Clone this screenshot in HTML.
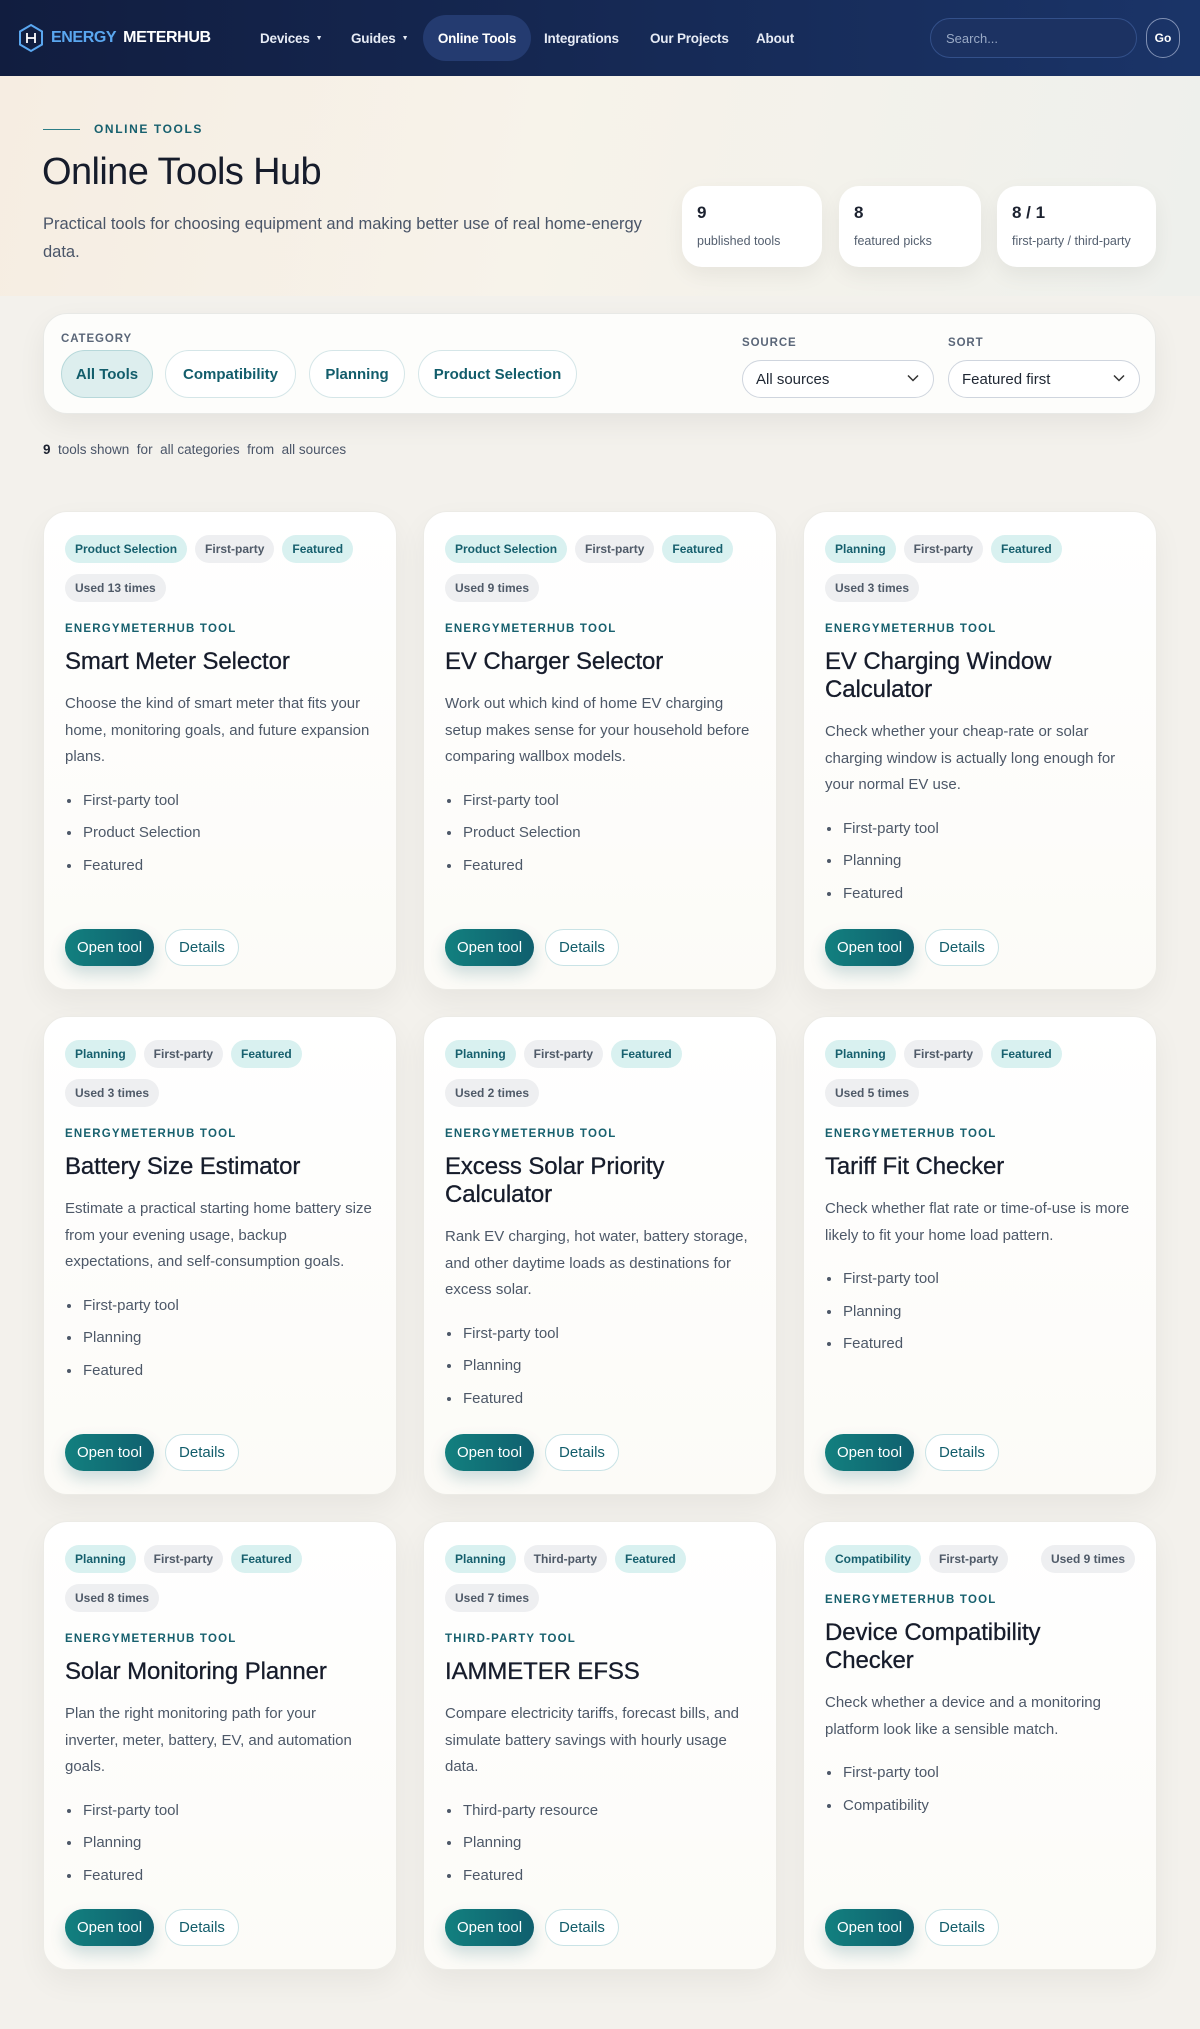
<!DOCTYPE html>
<html><head><meta charset="utf-8">
<style>
*{box-sizing:border-box;margin:0;padding:0}
body{width:1200px;height:2029px;overflow:hidden;font-family:"Liberation Sans",sans-serif;background:#f3f1ec;color:#1c2230}
.nav{height:76px;background:linear-gradient(90deg,#111d3f,#1a3468);color:#fff;position:relative;box-shadow:0 6px 18px rgba(0,0,0,.18)}
.logo{position:absolute;left:18px;top:0;height:76px;display:flex;align-items:center;gap:7px;font-weight:bold;font-size:16px;letter-spacing:-.4px}
.logo .e{color:#5aa7f0}
.mi{position:absolute;top:15px;height:46px;display:flex;align-items:center;font-size:13.5px;font-weight:bold;color:#e6ebf5;letter-spacing:-.2px}
.mi.act{background:#243b70;border-radius:23px;color:#fff;justify-content:center}
.caret{font-size:7px;margin-left:6px}
.search{position:absolute;left:930px;top:18px;width:207px;height:40px;border:1px solid #33508a;border-radius:20px;background:#1c3262;color:#9aaac6;font-size:13px;display:flex;align-items:center;padding-left:15px}
.go{position:absolute;left:1146px;top:18px;width:34px;height:40px;border:1px solid #8191b4;border-radius:20px;font-size:12px;font-weight:bold;display:flex;align-items:center;justify-content:center}
.hero{height:220px;background:linear-gradient(100deg,#f6ede2 0%,#f7f3ea 45%,#eef0ec 100%);position:relative}
.eyebrow{position:absolute;left:43px;font-size:12px;font-weight:bold;letter-spacing:1.6px;color:#17606e;display:flex;align-items:center;gap:14px}
.eyebrow i{display:block;width:37px;height:1px;background:#2c7d86}
.hero h1{position:absolute;left:42px;font-size:38px;font-weight:normal;letter-spacing:-.6px;color:#161c2b}
.hero p{position:absolute;left:43px;width:610px;font-size:16.5px;line-height:28px;color:#4a5568}
.stat{position:absolute;top:186px;height:81px;background:#fff;border-radius:20px;padding:17px 15px;box-shadow:0 8px 22px rgba(0,0,0,.06)}
.stat b{display:block;font-size:17px;color:#1c2230}
.stat span{display:block;font-size:12.5px;color:#556070;margin-top:11px}
.filter{position:absolute;left:43px;top:313px;width:1113px;height:101px;background:#fdfdfb;border:1px solid #e8e9e6;border-radius:24px;box-shadow:0 10px 28px rgba(0,0,0,.06)}
.lbl{position:absolute;font-size:11.5px;font-weight:bold;letter-spacing:.9px;color:#5a6678}
.pill{position:absolute;top:36px;height:48px;border:1px solid #d5e6e8;border-radius:24px;font-weight:bold;font-size:15px;color:#125d6b;display:flex;align-items:center;justify-content:center;background:#fff}
.pill.on{background:#ddeeee;border-color:#b7d8da}
.sel{position:absolute;top:46px;height:38px;border:1px solid #cfd5de;border-radius:19px;background:#fff;font-size:15px;color:#1f2733;display:flex;align-items:center;padding-left:13px}
.sel svg{position:absolute;right:14px;top:13px}
.summary{position:absolute;left:43px;top:442px;font-size:13.5px;color:#4a5568}
.summary b{color:#1c2230}
.card{position:absolute;width:354px;background:linear-gradient(180deg,#fff 0%,#fcfbf7 100%);border:1px solid #ecebe6;border-radius:24px;padding:23px 21px 23px;display:flex;flex-direction:column;box-shadow:0 12px 30px rgba(0,0,0,.05)}
.tags{display:flex;flex-wrap:wrap;gap:11px 8px;align-items:center}
.tag{height:28px;border-radius:14px;padding:0 10px;font-size:12px;font-weight:bold;display:flex;align-items:center;background:#eeeff1;color:#4f5a68}
.tag.t{background:#d9f1f0;color:#17606e}
.ey{margin-top:21px;font-size:11.5px;font-weight:bold;letter-spacing:1.2px;color:#17606e}
.card h3{margin-top:13px;font-size:24px;font-weight:normal;line-height:28px;letter-spacing:-.1px;color:#161c2b;-webkit-text-stroke:.3px #161c2b;padding-right:20px}
.desc{margin-top:15px;font-size:15px;line-height:26.5px;color:#4d5868;padding-right:0}
.card ul{margin-top:14px;padding-left:17px;font-size:15px;color:#4d5868}
.card li{line-height:32.5px;padding-left:1px}
.card li::marker{font-size:15px}
.acts{margin-top:auto;display:flex;gap:11px}
.open{height:37px;padding:0 12px;border-radius:19px;background:linear-gradient(90deg,#12807f,#105f6e);color:#fff;font-size:15px;display:flex;align-items:center;box-shadow:0 8px 16px rgba(16,95,110,.2)}
.det{height:37px;padding:0 13px;border-radius:19px;border:1px solid #c9e3e6;background:#fff;color:#125d6b;font-size:15px;display:flex;align-items:center}
</style></head><body>
<div class="nav">
 <div class="logo"><svg width="26" height="30" viewBox="0 0 26 30"><path d="M13 2 L24 8.5 V21.5 L13 28 L2 21.5 V8.5 Z" fill="none" stroke="#5aa7f0" stroke-width="2"/><path d="M9 10 V20 M17 10 V20 M9 15 H17" stroke="#fff" stroke-width="1.8"/></svg><span class="e">ENERGY</span><span>METERHUB</span></div>
 <div class="mi" style="left:260px">Devices<span class="caret">▼</span></div>
 <div class="mi" style="left:351px">Guides<span class="caret">▼</span></div>
 <div class="mi act" style="left:423px;width:108px">Online Tools</div>
 <div class="mi" style="left:544px">Integrations</div>
 <div class="mi" style="left:650px">Our Projects</div>
 <div class="mi" style="left:756px">About</div>
 <div class="search">Search...</div><div class="go">Go</div>
</div>
<div class="hero">
 <div class="eyebrow" style="top:46px"><i></i>ONLINE TOOLS</div>
 <h1 style="top:75px">Online Tools Hub</h1>
 <p style="top:134px">Practical tools for choosing equipment and making better use of real home-energy data.</p>
</div>
<div class="stat" style="left:682px;width:140px"><b>9</b><span>published tools</span></div>
<div class="stat" style="left:839px;width:142px"><b>8</b><span>featured picks</span></div>
<div class="stat" style="left:997px;width:159px"><b>8 / 1</b><span>first-party / third-party</span></div>

<div class="filter">
 <div class="lbl" style="left:17px;top:19px">CATEGORY</div>
 <div class="pill on" style="left:17px;width:92px">All Tools</div>
 <div class="pill" style="left:121px;width:131px">Compatibility</div>
 <div class="pill" style="left:265px;width:96px">Planning</div>
 <div class="pill" style="left:374px;width:159px">Product Selection</div>
 <div class="lbl" style="left:698px;top:23px">SOURCE</div>
 <div class="lbl" style="left:904px;top:23px">SORT</div>
 <div class="sel" style="left:698px;width:192px">All sources<svg width="12" height="8" viewBox="0 0 12 8"><path d="M1 1.5 L6 6.5 L11 1.5" fill="none" stroke="#333" stroke-width="1.5"/></svg></div>
 <div class="sel" style="left:904px;width:192px">Featured first<svg width="12" height="8" viewBox="0 0 12 8"><path d="M1 1.5 L6 6.5 L11 1.5" fill="none" stroke="#333" stroke-width="1.5"/></svg></div>
</div>
<div class="summary"><b>9</b>&nbsp; tools shown&nbsp; for&nbsp; all categories&nbsp; from&nbsp; all sources</div>

<div class="card" style="left:43px;top:511px;height:479px">
 <div class="tags"><span class="tag t">Product Selection</span><span class="tag">First-party</span><span class="tag t">Featured</span><span class="tag">Used 13 times</span></div>
 <div class="ey">ENERGYMETERHUB TOOL</div><h3>Smart Meter Selector</h3>
 <div class="desc">Choose the kind of smart meter that fits your home, monitoring goals, and future expansion plans.</div>
 <ul><li>First-party tool</li><li>Product Selection</li><li>Featured</li></ul>
 <div class="acts"><span class="open">Open tool</span><span class="det">Details</span></div>
</div>
<div class="card" style="left:423px;top:511px;height:479px">
 <div class="tags"><span class="tag t">Product Selection</span><span class="tag">First-party</span><span class="tag t">Featured</span><span class="tag">Used 9 times</span></div>
 <div class="ey">ENERGYMETERHUB TOOL</div><h3>EV Charger Selector</h3>
 <div class="desc">Work out which kind of home EV charging setup makes sense for your household before comparing wallbox models.</div>
 <ul><li>First-party tool</li><li>Product Selection</li><li>Featured</li></ul>
 <div class="acts"><span class="open">Open tool</span><span class="det">Details</span></div>
</div>
<div class="card" style="left:803px;top:511px;height:479px">
 <div class="tags"><span class="tag t">Planning</span><span class="tag">First-party</span><span class="tag t">Featured</span><span class="tag">Used 3 times</span></div>
 <div class="ey">ENERGYMETERHUB TOOL</div><h3>EV Charging Window Calculator</h3>
 <div class="desc">Check whether your cheap-rate or solar charging window is actually long enough for your normal EV use.</div>
 <ul><li>First-party tool</li><li>Planning</li><li>Featured</li></ul>
 <div class="acts"><span class="open">Open tool</span><span class="det">Details</span></div>
</div>

<div class="card" style="left:43px;top:1016px;height:479px">
 <div class="tags"><span class="tag t">Planning</span><span class="tag">First-party</span><span class="tag t">Featured</span><span class="tag">Used 3 times</span></div>
 <div class="ey">ENERGYMETERHUB TOOL</div><h3>Battery Size Estimator</h3>
 <div class="desc">Estimate a practical starting home battery size from your evening usage, backup expectations, and self-consumption goals.</div>
 <ul><li>First-party tool</li><li>Planning</li><li>Featured</li></ul>
 <div class="acts"><span class="open">Open tool</span><span class="det">Details</span></div>
</div>
<div class="card" style="left:423px;top:1016px;height:479px">
 <div class="tags"><span class="tag t">Planning</span><span class="tag">First-party</span><span class="tag t">Featured</span><span class="tag">Used 2 times</span></div>
 <div class="ey">ENERGYMETERHUB TOOL</div><h3>Excess Solar Priority Calculator</h3>
 <div class="desc">Rank EV charging, hot water, battery storage, and other daytime loads as destinations for excess solar.</div>
 <ul><li>First-party tool</li><li>Planning</li><li>Featured</li></ul>
 <div class="acts"><span class="open">Open tool</span><span class="det">Details</span></div>
</div>
<div class="card" style="left:803px;top:1016px;height:479px">
 <div class="tags"><span class="tag t">Planning</span><span class="tag">First-party</span><span class="tag t">Featured</span><span class="tag">Used 5 times</span></div>
 <div class="ey">ENERGYMETERHUB TOOL</div><h3>Tariff Fit Checker</h3>
 <div class="desc">Check whether flat rate or time-of-use is more likely to fit your home load pattern.</div>
 <ul><li>First-party tool</li><li>Planning</li><li>Featured</li></ul>
 <div class="acts"><span class="open">Open tool</span><span class="det">Details</span></div>
</div>

<div class="card" style="left:43px;top:1521px;height:449px">
 <div class="tags"><span class="tag t">Planning</span><span class="tag">First-party</span><span class="tag t">Featured</span><span class="tag">Used 8 times</span></div>
 <div class="ey">ENERGYMETERHUB TOOL</div><h3>Solar Monitoring Planner</h3>
 <div class="desc">Plan the right monitoring path for your<br>inverter, meter, battery, EV, and automation goals.</div>
 <ul><li>First-party tool</li><li>Planning</li><li>Featured</li></ul>
 <div class="acts"><span class="open">Open tool</span><span class="det">Details</span></div>
</div>
<div class="card" style="left:423px;top:1521px;height:449px">
 <div class="tags"><span class="tag t">Planning</span><span class="tag">Third-party</span><span class="tag t">Featured</span><span class="tag">Used 7 times</span></div>
 <div class="ey">THIRD-PARTY TOOL</div><h3>IAMMETER EFSS</h3>
 <div class="desc">Compare electricity tariffs, forecast bills, and simulate battery savings with hourly usage data.</div>
 <ul><li>Third-party resource</li><li>Planning</li><li>Featured</li></ul>
 <div class="acts"><span class="open">Open tool</span><span class="det">Details</span></div>
</div>
<div class="card" style="left:803px;top:1521px;height:449px">
 <div class="tags"><span class="tag t">Compatibility</span><span class="tag">First-party</span><span class="tag" style="margin-left:auto">Used 9 times</span></div>
 <div class="ey">ENERGYMETERHUB TOOL</div><h3>Device Compatibility<br>Checker</h3>
 <div class="desc">Check whether a device and a monitoring platform look like a sensible match.</div>
 <ul><li>First-party tool</li><li>Compatibility</li></ul>
 <div class="acts"><span class="open">Open tool</span><span class="det">Details</span></div>
</div>
</body></html>
